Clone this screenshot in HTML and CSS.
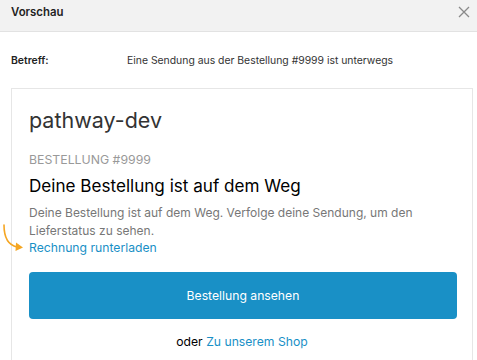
FILE: index.html
```html
<!DOCTYPE html>
<html lang="de">
<head>
  <meta charset="UTF-8">
  <title>Vorschau</title>
  <link rel="stylesheet" href="styles.css">
</head>
<body>

<header class="modal-head">
  <h1>Vorschau</h1>
  <svg class="close" width="12" height="12" viewBox="0 0 12 12">
    <path d="M1 1 L11 11 M11 1 L1 11" stroke="#8a8a8a" stroke-width="1.3" fill="none"/>
  </svg>
</header>

<div class="subject">
  <span class="label">Betreff:</span>
  <span class="value">Eine Sendung aus der Bestellung #9999 ist unterwegs</span>
</div>

<div class="mail">
  <svg class="hint-arrow" width="26" height="34" viewBox="0 0 26 34">
    <path d="M4 2 C4 14 8 22 17 24" stroke="#f5a623" stroke-width="1.6" fill="none" stroke-linecap="round"/>
    <path d="M16 19.5 L23 24.5 L15.5 28 Z" fill="#f5a623"/>
  </svg>
  <div class="shop">pathway-dev</div>
  <div class="order-no">BESTELLUNG #9999</div>
  <h2>Deine Bestellung ist auf dem Weg</h2>
  <p>Deine Bestellung ist auf dem Weg. Verfolge deine Sendung, um den Lieferstatus zu sehen.</p>
  <a class="invoice" href="#">Rechnung runterladen</a>
  <a class="btn" href="#">Bestellung ansehen</a>
  <div class="alt">oder <a href="#">Zu unserem Shop</a></div>
</div>

</body>
</html>
```

FILE: styles.css
```css
body {
  margin: 0;
  font-family: Inter, "Liberation Sans", sans-serif;
  background: #ffffff;
  color: #222;
  overflow: hidden;
}

.modal-head {
  display: flex;
  justify-content: space-between;
  align-items: center;
  height: 31px;
  padding: 0 7px 0 11px;
  background: #f2f2f2;
  border-bottom: 1px solid #e2e2e2;
}

.modal-head h1 {
  margin: 0;
  font-size: 11.4px;
  font-weight: 600;
  color: #222;
  position: relative;
  top: -4px;
}

.close {
  position: relative;
  top: -4px;
}

.subject {
  display: flex;
  align-items: center;
  padding: 0 11px;
  height: 56px;
  font-size: 10.4px;
}

.subject .label {
  width: 116px;
  font-weight: 600;
}

.subject .value {
  color: #333;
}

.mail {
  position: relative;
  margin: 0 4px 0 11px;
  border: 1px solid #e6e6e6;
  border-bottom: none;
  padding: 16px 17px 0 17px;
  height: 400px;
}

.hint-arrow {
  position: absolute;
  left: -12px;
  top: 134px;
}

.shop {
  font-size: 21.5px;
  color: #333;
  line-height: 30px;
}

.order-no {
  margin-top: 16px;
  font-size: 12.3px;
  color: #999;
  line-height: 18px;
}

.mail h2 {
  margin: 4px 0 0;
  font-size: 17.1px;
  font-weight: 400;
  color: #000;
  line-height: 26px;
}

.mail p {
  margin: 5px 0 0;
  font-size: 12px;
  color: #777;
  line-height: 17.5px;
}

.invoice {
  display: block;
  font-size: 12.2px;
  color: #1990c6;
  text-decoration: none;
  line-height: 17px;
}

.btn {
  display: flex;
  justify-content: center;
  align-items: center;
  margin-top: 16px;
  height: 47px;
  width: 428px;
  background: #1990c6;
  border-radius: 4px;
  color: #fff;
  font-size: 12.2px;
  text-decoration: none;
}

.alt {
  margin-top: 15px;
  text-align: center;
  font-size: 12.2px;
  color: #000;
}

.alt a {
  color: #1990c6;
  text-decoration: none;
}
```
